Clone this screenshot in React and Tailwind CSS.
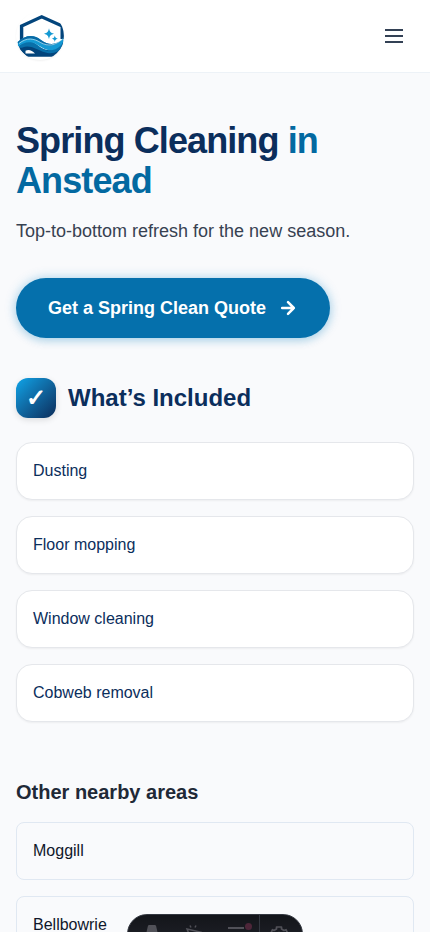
import React from "react";

const included = ["Dusting", "Floor mopping", "Window cleaning", "Cobweb removal"];
const areas = ["Moggill", "Bellbowrie"];

function Logo() {
  return (
    <svg viewBox="0 0 48 48" className="size-12 rounded-full bg-white shadow-[0_1px_2px_rgba(0,0,0,0.06)]">
      <path d="M5.600 29V14L25.700 4.800 46.200 14v13" fill="none" stroke="#03457c" strokeWidth="3.400" />
      <path d="M3 34C14 29 21 36 31 38c7 1 12-4 16-9v8l-6 7.700H11L4 38z" fill="#03457c" />
      <path d="M9.500 41.500v-2.800c3.500-1.500 6.500-.2 9.500 2.800z" fill="#fff" />
      <path d="M2.500 34C14 23 20 33 29 38c7 2 14-3 18.500-10v6c-3 5-9 8-16 7-9-1.500-16-9-25-5.500-2 .8-3.500 0-4-1.500z" fill="#0970aa" />
      <path d="M1.700 30C10 22.500 18 22.500 25 28c8 6 16 5 22.800-2-.3 5-3.300 9-8.300 11.200-9 3.500-14-2.500-20-5.400-7-3-12-1-17.500 2.700z" fill="#1499d3" />
      <path d="M1.700 30C10 22.500 18 22.500 25 28c7 5.300 14 5 20 .5-7 6.500-14 6-21 1.500C16 25 10 25 2 31.500z" fill="#0a6aa5" />
      <path d="M3 31.500c8-6.500 15-5 21.500-1C32 34.500 39 34 46.500 27" fill="none" stroke="#c9ebf7" strokeWidth=".7" />
      <path d="M33 16.200c.7 3.600 1.800 4.800 5.300 5.500-3.500.7-4.600 1.900-5.300 5.500-.7-3.600-1.800-4.800-5.300-5.500 3.500-.7 4.600-1.900 5.300-5.500zM38.800 23.600c.4 2.100 1.100 2.800 3.100 3.200-2 .4-2.700 1.100-3.100 3.200-.4-2.100-1.100-2.800-3.100-3.200 2-.4 2.700-1.100 3.100-3.200z" fill="#1499d3" />
    </svg>
  );
}

function Header() {
  return (
    <header className="flex h-[73px] items-center justify-between border-b border-[#edf2f7] bg-white px-4">
      <Logo />
      <button aria-label="Open menu" className="flex size-10 items-center justify-center text-[#334155]">
        <svg viewBox="0 0 24 24" className="size-6" fill="none" stroke="currentColor" strokeWidth="2">
          <path d="M3 6h18M3 12h18M3 18h18" />
        </svg>
      </button>
    </header>
  );
}

function DevToolbar() {
  return (
    <div className="fixed -bottom-[22px] left-[127px] flex h-10 w-44 overflow-hidden rounded-full border border-[#343841] bg-linear-to-b from-[#13151a] to-[#24252d] text-[#515158]">
      <div className="flex w-[47px] justify-center pt-2.5">
        <svg viewBox="0 0 20 24" className="h-6 w-5" fill="currentColor">
          <path d="M7.200 0h5.600q1 0 1.300 1L18 18l-5.500-1.500-2.500-8-2.500 8L2 18 5.900 1q.3-1 1.300-1z" />
        </svg>
      </div>
      <div className="flex w-[38px] justify-center pt-2.5">
        <svg viewBox="0 0 20 20" className="size-5" fill="none" stroke="currentColor" strokeWidth="1.500">
          <path d="m3 4 13 3-6 3-2 6zM7 2.500 6 .5M11 2.500l1-2" />
        </svg>
      </div>
      <div className="relative flex w-[46px] justify-center pt-3">
        <svg viewBox="0 0 20 20" className="size-5" fill="none" stroke="currentColor" strokeWidth="2">
          <path d="M2 1h16M2 7h16" />
        </svg>
        <span className="absolute right-[7px] top-2 size-[7px] rounded-full bg-[#4d2639]" />
      </div>
      <div className="flex w-[39px] justify-center border-l border-[#343841] pt-[11px]">
        <svg viewBox="0 0 20 20" className="size-5" fill="none" stroke="currentColor" strokeWidth="1.700" strokeLinejoin="round">
          <path d="M7.500 3V1h5v2l2.500 1.500L17 3.700l2 4.300-2 2 2 2.500-2.500 4H4.500l-3-4 2-2.500-2-2L3.500 3.700 5 4.500z" />
          <circle cx="10" cy="10" r="3.500" />
        </svg>
      </div>
    </div>
  );
}

export default function App() {
  return (
    <div className="h-[932px] overflow-hidden bg-[#f9fafc] font-['Liberation_Sans',Arial,sans-serif] text-[#0f172a]">
      <Header />
      <main className="px-4 pt-12">
        <h1 className="text-4xl leading-10 font-bold tracking-tight text-[#0b2e5c]">
          Spring Cleaning <span className="text-[#0369a1]">in Anstead</span>
        </h1>
        <p className="mt-4 text-lg leading-7 text-[#374151]">Top-to-bottom refresh for the new season.</p>
        <a className="mt-[33px] inline-flex h-[60px] items-center gap-3 rounded-full bg-[#0570ac] px-8 text-lg font-semibold text-white shadow-[0_0_12px_rgba(14,140,210,0.3),0_3px_8px_rgba(3,105,161,0.15)]">
          Get a Spring Clean Quote
          <svg viewBox="0 0 24 24" className="size-5" fill="none" stroke="currentColor" strokeWidth="3" strokeLinecap="round" strokeLinejoin="round">
            <path d="M5 12h14M12 5l7 7-7 7" />
          </svg>
        </a>
        <section className="mt-10">
          <div className="flex items-center gap-3">
            <span className="flex size-10 items-center justify-center rounded-xl bg-linear-to-br from-[#0ea5e9] to-[#0b2e5c] text-2xl font-bold text-white shadow-[0_2px_6px_rgba(0,0,0,0.12)]">✓</span>
            <h2 className="text-2xl font-bold text-[#0b2e5c]">What’s Included</h2>
          </div>
          <ul className="mt-6 space-y-4">
            {included.map((item) => (
              <li key={item} className="rounded-2xl border border-gray-200 bg-white p-4 text-base text-[#0b2e5c] shadow-[0_1px_2px_rgba(0,0,0,0.05)]">{item}</li>
            ))}
          </ul>
        </section>
        <section className="mt-14">
          <h2 className="text-xl font-bold text-[#1f2937]">Other nearby areas</h2>
          <ul className="mt-4 space-y-4">
            {areas.map((item) => (
              <li key={item} className="rounded-lg border border-[#e0e8f2] p-4 text-base">{item}</li>
            ))}
          </ul>
        </section>
      </main>
      <DevToolbar />
    </div>
  );
}
